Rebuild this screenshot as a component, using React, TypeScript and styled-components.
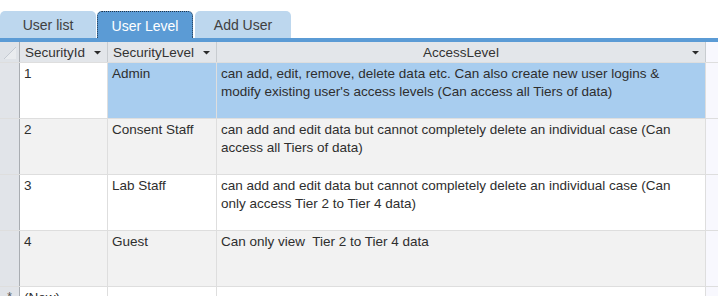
import styled, { createGlobalStyle } from "styled-components";

const GlobalStyle = createGlobalStyle`
  html, body {
    margin: 0;
    padding: 0;
    background: #ffffff;
  }
  body {
    font-family: "Liberation Sans", Arial, sans-serif;
    color: #333333;
  }
`;

type Level = {
  id: string;
  name: string;
  access: string;
};

const levels: Level[] = [
  {
    id: "1",
    name: "Admin",
    access:
      "can add, edit, remove, delete data etc. Can also create new user logins &\nmodify existing user's access levels (Can access all Tiers of data)",
  },
  {
    id: "2",
    name: "Consent Staff",
    access:
      "can add and edit data but cannot completely delete an individual case (Can\naccess all Tiers of data)",
  },
  {
    id: "3",
    name: "Lab Staff",
    access:
      "can add and edit data but cannot completely delete an individual case (Can\nonly access Tier 2 to Tier 4 data)",
  },
  {
    id: "4",
    name: "Guest",
    access: "Can only view  Tier 2 to Tier 4 data",
  },
];

const COLS = "20px 88px 109px 489px 1fr";

function App() {
  return (
    <Page>
      <GlobalStyle />
      <TabStrip>
        <Tab>User list</Tab>
        <Tab $active>User Level</Tab>
        <Tab>Add User</Tab>
      </TabStrip>
      <BlueBar />
      <Sheet>
        <HeaderRow>
          <Corner>
            <svg width="14" height="14" viewBox="0 0 14 14">
              <polygon points="1,13 13,1 13,13" fill="#e9ecef" />
              <line x1="1" y1="13" x2="13" y2="1" stroke="#c4cad2" strokeWidth="1" />
            </svg>
          </Corner>
          <HeadCell>
            SecurityId
            <DropArrow />
          </HeadCell>
          <HeadCell>
            SecurityLevel
            <DropArrow />
          </HeadCell>
          <HeadCell $center>
            AccessLevel
            <DropArrow />
          </HeadCell>
          <Filler />
        </HeaderRow>
        {levels.map((l, i) => (
          <Row key={l.id} $tone={i === 0 ? "selected" : i % 2 === 1 ? "alt" : "plain"}>
            <Selector />
            <Cell $focus={i === 0}>{l.id}</Cell>
            <Cell>{l.name}</Cell>
            <Cell>{l.access}</Cell>
            <Filler />
          </Row>
        ))}
        <Row $tone="plain">
          <Selector>
            <Star>*</Star>
          </Selector>
          <Cell>(New)</Cell>
          <Cell />
          <Cell />
          <Filler />
        </Row>
      </Sheet>
    </Page>
  );
}

function DropArrow() {
  return (
    <Arrow width="7" height="5" viewBox="0 0 7 5">
      <polygon points="0,1 7,1 3.5,4.5" fill="#2b2b2b" />
    </Arrow>
  );
}

const Page = styled.div`
  width: 718px;
  height: 296px;
  overflow: hidden;
  background: #ffffff;
`;

const TabStrip = styled.div`
  display: flex;
  gap: 1px;
  padding-top: 11px;
  height: 38px;
  box-sizing: border-box;
  align-items: stretch;
`;

const Tab = styled.div<{ $active?: boolean }>`
  width: 96px;
  box-sizing: border-box;
  display: flex;
  align-items: center;
  justify-content: center;
  font-size: 14px;
  padding-top: 1px;
  border-radius: 5px 5px 0 0;
  background: ${(p) => (p.$active ? "#5b9bd5" : "#bdd7ee")};
  color: ${(p) => (p.$active ? "#ffffff" : "#404040")};
  border: ${(p) => (p.$active ? "1px dotted #1f3349" : "none")};
  border-bottom: none;
  margin-right: ${(p) => (p.$active ? "1px" : "0")};
`;

const BlueBar = styled.div`
  height: 4px;
  background: #5b9bd5;
`;

const Sheet = styled.div`
  display: flex;
  flex-direction: column;
`;

const HeaderRow = styled.div`
  display: grid;
  grid-template-columns: ${COLS};
  height: 20px;
  background: #e3e6ea;
`;

const Corner = styled.div`
  display: flex;
  align-items: flex-end;
  padding: 0 0 2px 3px;
  border-right: 1px solid #a9adb2;
  background: #dfe3e8;
`;

const HeadCell = styled.div<{ $center?: boolean }>`
  position: relative;
  display: flex;
  align-items: center;
  justify-content: ${(p) => (p.$center ? "center" : "flex-start")};
  padding-left: ${(p) => (p.$center ? "0" : "5px")};
  font-size: 13.5px;
  color: #333333;
  border-right: 1px solid #c8ccd0;
`;

const Arrow = styled.svg`
  position: absolute;
  right: 6px;
  top: 8px;
`;

const Filler = styled.div`
  background: #f8f8fe;
`;

const tones = {
  selected: "#a8cdef",
  alt: "#f2f2f2",
  plain: "#ffffff",
};

const Row = styled.div<{ $tone: keyof typeof tones }>`
  display: grid;
  grid-template-columns: ${COLS};
  height: 56px;
  flex-shrink: 0;
  box-sizing: border-box;
  background: ${(p) => tones[p.$tone]};
  border-top: 1px solid #dedede;
`;

const Selector = styled.div`
  background: #e1e4e9;
  border-right: 1px solid #a9adb2;
  display: flex;
  align-items: flex-start;
  justify-content: center;
`;

const Star = styled.span`
  font-size: 12px;
  color: #555555;
  margin-top: 3px;
`;

const Cell = styled.div<{ $focus?: boolean }>`
  padding: 2px 4px 0 4px;
  font-size: 13.5px;
  line-height: 18px;
  color: #2e2e2e;
  white-space: pre-wrap;
  border-right: 1px solid #dedede;
  background: ${(p) => (p.$focus ? "#ffffff" : "transparent")};
  overflow: hidden;
`;

export default App;
